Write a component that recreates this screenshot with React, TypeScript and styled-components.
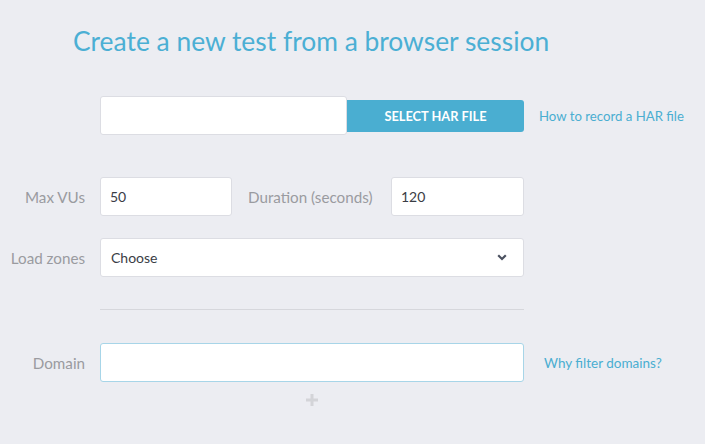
import React from "react";
import styled, { createGlobalStyle } from "styled-components";

const Global = createGlobalStyle`
  html, body { margin: 0; padding: 0; background: #ecedf2; }
  body { font-family: Lato, "Open Sans", sans-serif; -webkit-font-smoothing: antialiased; }
  * { box-sizing: border-box; }
`;

const Page = styled.div`
  width: 705px;
  height: 444px;
  background: #ecedf2;
  overflow: hidden;
`;

const Title = styled.h1`
  margin: 0;
  padding: 24px 0 0 73px;
  font-weight: 400;
  font-size: 26.4px;
  line-height: 34px;
  color: #4bafd4;
`;

const Form = styled.div`
  display: grid;
  grid-template-columns: 85px 424px auto;
  column-gap: 15px;
  align-items: center;
  margin-top: 38px;
`;

const Label = styled.label<{ $mt?: number }>`
  justify-self: end;
  font-size: 15.2px;
  color: #9a9ba0;
  white-space: nowrap;
  margin-top: ${(p) => p.$mt ?? 0}px;
`;

const Cell = styled.div<{ $mt?: number }>`
  display: flex;
  align-items: center;
  margin-top: ${(p) => p.$mt ?? 0}px;
`;

const Spacer = styled.div<{ $mt?: number }>`
  margin-top: ${(p) => p.$mt ?? 0}px;
`;

const Input = styled.div<{ $w?: number; $focus?: boolean }>`
  width: ${(p) => (p.$w ? `${p.$w}px` : "100%")};
  flex: ${(p) => (p.$w ? "none" : "1")};
  height: 39px;
  background: #fff;
  border: 1px solid ${(p) => (p.$focus ? "#a7d5e8" : "#dcdde3")};
  border-radius: 3px;
  display: flex;
  align-items: center;
  padding: 0 9px;
  font-size: 14px;
  color: #3a3d45;
`;

const FileInput = styled(Input)`
  width: 247px;
  flex: none;
`;

const Button = styled.button`
  width: 177px;
  height: 32px;
  border: none;
  border-radius: 0 3px 3px 0;
  background: #4aaed1;
  color: #fff;
  font-family: inherit;
  font-weight: 700;
  font-size: 12.8px;
  padding: 0;
`;

const Link = styled.a<{ $ml?: number; $mt?: number; $fs?: number }>`
  color: #4aaed1;
  font-size: ${(p) => p.$fs ?? 13.3}px;
  margin-left: ${(p) => p.$ml ?? 0}px;
  margin-top: ${(p) => p.$mt ?? 0}px;
  white-space: nowrap;
  cursor: pointer;
`;

const InlineLabel = styled.span`
  flex: 1;
  font-size: 15.2px;
  color: #9a9ba0;
  margin-left: 16px;
  white-space: nowrap;
`;

const Select = styled(Input)`
  justify-content: space-between;
  padding: 0 16px 0 10px;
`;

const Divider = styled.div`
  grid-column: 2;
  height: 1px;
  background: #d6d7dc;
  margin-top: 32px;
`;

const PlusRow = styled.div`
  grid-column: 2;
  display: flex;
  justify-content: center;
  margin-top: 12px;
`;

const Chevron = () => (
  <svg width="10" height="7" viewBox="0 0 10 7">
    <path d="M1.2 1.2 L5 5 L8.8 1.2" fill="none" stroke="#4b5160" strokeWidth="2.2" />
  </svg>
);

const Plus = () => (
  <svg width="12" height="12" viewBox="0 0 12 12">
    <path d="M6 0 V12 M0 6 H12" stroke="#d3d4d8" strokeWidth="3" />
  </svg>
);

export default function App() {
  return (
    <Page>
      <Global />
      <Title>Create a new test from a browser session</Title>
      <Form>
        <span />
        <Cell>
          <FileInput />
          <Button>SELECT HAR FILE</Button>
        </Cell>
        <Link $fs={13.2}>How to record a HAR file</Link>

        <Label $mt={42}>Max VUs</Label>
        <Cell $mt={42}>
          <Input $w={132}>50</Input>
          <InlineLabel>Duration (seconds)</InlineLabel>
          <Input $w={133}>120</Input>
        </Cell>
        <Spacer $mt={42} />

        <Label $mt={22}>Load zones</Label>
        <Cell $mt={22}>
          <Select>
            <span>Choose</span>
            <Chevron />
          </Select>
        </Cell>
        <span />

        <span />
        <Divider />
        <span />

        <Label $mt={33}>Domain</Label>
        <Cell $mt={33}>
          <Input $focus />
        </Cell>
        <Link $ml={5} $mt={33} $fs={13.5}>Why filter domains?</Link>

        <span />
        <PlusRow>
          <Plus />
        </PlusRow>
        <span />
      </Form>
    </Page>
  );
}
